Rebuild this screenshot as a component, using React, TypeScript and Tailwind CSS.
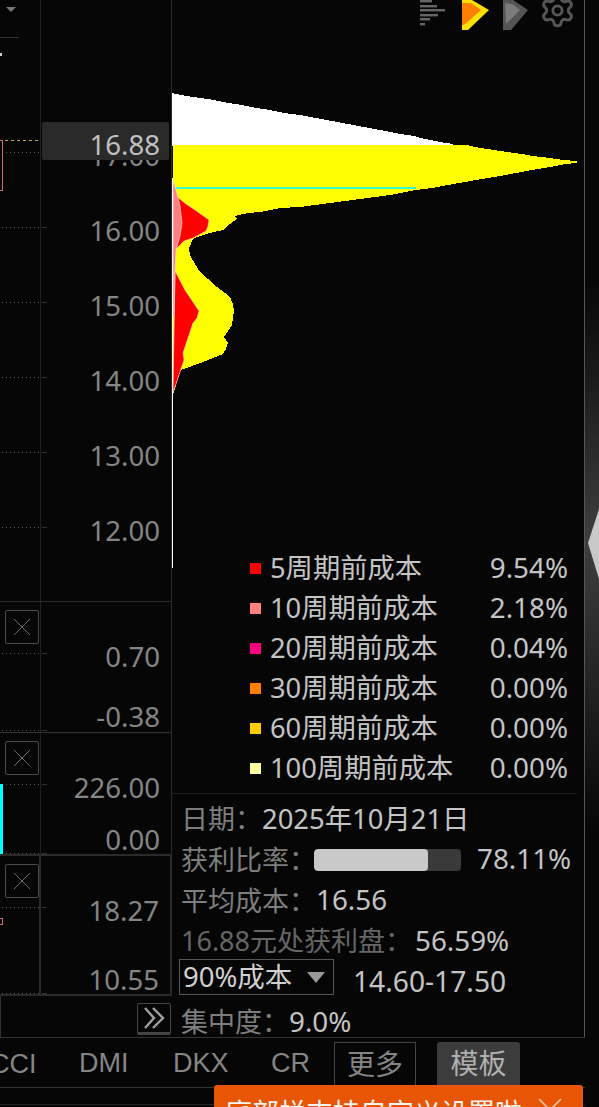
import React from "react";
import { Settings } from "lucide-react";

const FONT = '"Noto Sans","Noto Sans CJK SC",sans-serif';

function Dots({ y, x0 = 6 }: { y: number; x0?: number }) {
  const dots: React.ReactNode[] = [];
  for (let x = x0; x < 40; x += 4) dots.push(<rect key={x} x={x} y={y} width={1} height={1} fill="#5a5a5a" />);
  return (
    <g>
      {dots}
      <rect x={42} y={y} width={5} height={1} fill="#333" />
    </g>
  );
}

function CloseBox({ mt }: { mt: string }) {
  return (
    <div className={`relative ml-[5px] w-[34px] h-[34px] rounded-[2px] border border-[#4a4a4a] flex items-center justify-center ${mt}`}>
      <svg width="18" height="18" viewBox="0 0 18 18">
        <path d="M1 1L17 17M17 1L1 17" stroke="#777" strokeWidth="0.9" fill="none" />
      </svg>
    </div>
  );
}

function AxisLabel({ children, cls }: { children: React.ReactNode; cls?: string }) {
  return <div className={`h-[30px] leading-[30px] text-right pr-[11px] text-[27.6px] text-[#858585] ${cls ?? ""}`}>{children}</div>;
}

function MainAxisLabel({ children }: { children: React.ReactNode }) {
  return <div className="h-[75px] leading-[75px] text-right pr-[11px] text-[27.6px] text-[#858585]">{children}</div>;
}

const LEGEND = [
  ["5周期前成本", "9.54%", "bg-[#ff0000]"],
  ["10周期前成本", "2.18%", "bg-[#ff8080]"],
  ["20周期前成本", "0.04%", "bg-[#ff0080]"],
  ["30周期前成本", "0.00%", "bg-[#ff8000]"],
  ["60周期前成本", "0.00%", "bg-[#ffcc00]"],
  ["100周期前成本", "0.00%", "bg-[#ffffa0]"],
];

function Chart() {
  return (
    <svg className="absolute left-0 top-0" width="412" height="600" viewBox="172 0 412 600" shapeRendering="crispEdges">
      <polygon fill="#fff" points="172,93 186,96 200,98 214,100 228,103 242,105 256,108 270,110 284,113 300,115 316,118 332,121 348,124 364,127 380,130 400,134 414,136 425,139 440,142 453,144 453,146 172,146" />
      <polygon
        fill="#ffff00"
        points="173,145 467,145 480,148 494,150 507,152 522,154 533,156 550,158 563,160 577,161 577,163 565,164 550,167 532,170 516,173 500,176 482,179 465,182 448,185 432,188 416,190 390,195 360,199 330,203 300,207 280,208 260,212 248,213 235,216 237,219 230,224 223,230 210,233 200,236 193,239 189,248 190,255 195,264 200,272 208,279 217,287 225,293 230,297 233,304 234,311 233,318 232,325 228,331 224,337 228,343 226,349 223,354 213,358 203,362 192,366 181,370 176,385 173,395"
      />
      <polygon fill="#ff0000" stroke="#ffd0d0" strokeWidth="0.6" shapeRendering="auto" points="176,196 186,204 198,212 209,220 208,226 206,231 193,238 184,241 176,249" />
      <polygon fill="#ff0000" stroke="#ffd0d0" strokeWidth="0.6" shapeRendering="auto" points="175,271 185,290 199,311 197,318 193,323 188,338 183,353 184,360 173,393" />
      <polygon fill="#ff8080" stroke="#ffd8d8" strokeWidth="0.7" shapeRendering="auto" points="173,180 176,190 180,206 182,223 180,236 176,250 175,270 174,315 173,315" />
      <rect x="176" y="187" width="240" height="2" fill="#33ffcc" />
      <rect x="172" y="178" width="1.4" height="390" fill="#fff" />
    </svg>
  );
}

function ToolIcons() {
  return (
    <div className="relative flex justify-end items-start gap-[13px] pr-[8px] h-[30px]">
      <svg width="26" height="26" viewBox="0 0 26 26" className="mr-[3px]">
        <g fill="#666">
          <rect x="1" y="0" width="12" height="2.4" />
          <rect x="1" y="5" width="17" height="2.4" />
          <rect x="1" y="9" width="25" height="2.4" />
          <rect x="1" y="14" width="18" height="2.4" />
          <rect x="1" y="18" width="10" height="2.4" />
          <rect x="1" y="23" width="5" height="2.4" />
        </g>
      </svg>
      <svg width="28" height="30" viewBox="0 0 28 30">
        <polygon points="1,0 11,0 28,10 7,30 1,30" fill="#ffe000" />
        <polygon points="1,3 10,3 20,10 3,25 1,25" fill="#ff8000" />
      </svg>
      <svg width="26" height="30" viewBox="0 0 26 30">
        <polygon points="1,0 11,0 26,10 9,30 1,30" fill="#555" />
        <polygon points="3,3 10,4 18,10 4,24" fill="#7c7c7c" />
      </svg>
      <Settings size={37} strokeWidth={1.9} color="#565656" className="mt-[-8px] ml-[-2px]" />
    </div>
  );
}

export default function App() {
  return (
    <div className="w-[599px] h-[1107px] overflow-hidden relative flex bg-[#060606]" style={{ fontFamily: FONT }}>
      <div className="w-[585px] flex flex-col shrink-0">
        <div className="flex h-[1038px] shrink-0 border-b border-[#333]">
          {/* left column */}
          <div className="w-[172px] shrink-0 flex flex-col">
            {/* row 1 */}
            <div className="relative h-[602px] shrink-0 flex border-b border-[#2b2b2b]">
              <div className="w-[41px] shrink-0 border-r border-[#222]">
                <svg width="40" height="600" className="overflow-visible">
                  <polygon points="6,7 16,7 11,12" fill="#777" />
                  <rect x="0" y="37" width="19" height="1" fill="#333" />
                  <rect x="0" y="53" width="2" height="3" fill="#ccc" />
                  <line x1="5" y1="140.5" x2="39" y2="140.5" stroke="#c7a157" strokeDasharray="3 3" />
                  <rect x="-2" y="140.5" width="4.5" height="50" fill="none" stroke="#d06a6a" />
                  <Dots y={152} />
                  <Dots y={227} x0={2} />
                  <Dots y={302} x0={2} />
                  <Dots y={377} x0={2} />
                  <Dots y={452} x0={2} />
                  <Dots y={527} x0={2} />
                </svg>
              </div>
              <div className="flex-1 pt-[118px] border-r border-[#2b2b2b]">
                <MainAxisLabel>17.00</MainAxisLabel>
                <MainAxisLabel>16.00</MainAxisLabel>
                <MainAxisLabel>15.00</MainAxisLabel>
                <MainAxisLabel>14.00</MainAxisLabel>
                <MainAxisLabel>13.00</MainAxisLabel>
                <MainAxisLabel>12.00</MainAxisLabel>
              </div>
              <div className="absolute left-[42px] top-[122px] w-[127px] h-[38px] rounded-[2px] bg-[#2a2a2a] text-right pr-[9px] text-[27.6px] leading-[44px] text-[#c0c0c0]">
                16.88
              </div>
            </div>
            {/* row 2 */}
            <div className="relative h-[131px] shrink-0 flex border-b border-[#333]">
              <div className="relative w-[41px] shrink-0 border-r border-[#222]">
                <svg width="40" height="130" className="absolute left-0 top-0 overflow-visible">
                  <Dots y={51} x0={2} />
                  <Dots y={128} x0={2} />
                </svg>
                <CloseBox mt="mt-[8px]" />
              </div>
              <div className="flex-1 pt-[39px] border-r border-[#2b2b2b]">
                <AxisLabel>0.70</AxisLabel>
                <AxisLabel cls="mt-[30px]">-0.38</AxisLabel>
              </div>
            </div>
            {/* row 3 */}
            <div className="relative h-[123px] shrink-0 flex border-b-2 border-[#2b2b2b]">
              <div className="relative w-[41px] shrink-0 border-r border-[#222]">
                <svg width="40" height="121" className="absolute left-0 top-0 overflow-visible">
                  <rect x="0" y="51" width="3" height="70" fill="#00ffff" />
                  <Dots y={51} x0={6} />
                  <Dots y={120} x0={6} />
                </svg>
                <CloseBox mt="mt-[8px]" />
              </div>
              <div className="flex-1 pt-[39px] border-r border-[#2b2b2b]">
                <AxisLabel>226.00</AxisLabel>
                <AxisLabel cls="mt-[22px]">0.00</AxisLabel>
              </div>
            </div>
            {/* row 4 */}
            <div className="relative h-[140px] shrink-0 flex border-b-2 border-[#2b2b2b]">
              <div className="relative w-[41px] shrink-0 border-r-2 border-[#2b2b2b]">
                <svg width="40" height="138" className="absolute left-0 top-0 overflow-visible">
                  <Dots y={51} x0={2} />
                  <Dots y={137} x0={2} />
                  <rect x="-2" y="62.5" width="4.5" height="6" fill="none" stroke="#d06a6a" />
                </svg>
                <CloseBox mt="mt-[8px]" />
              </div>
              <div className="flex-1 pt-[39px] border-r-2 border-[#2b2b2b]">
                <AxisLabel>18.27</AxisLabel>
                <AxisLabel cls="mt-[39px]">10.55</AxisLabel>
              </div>
            </div>
            {/* toolbar */}
            <div className="flex-1 flex justify-end items-start pt-[7px] pr-[1px] border-l border-[#333]">
              <div className="w-[34px] h-[32px] rounded-[2px] border border-[#444] border-b-[3px] flex items-center justify-center">
                <svg width="24" height="22" viewBox="0 0 24 22" fill="none" stroke="#a0a0a0" strokeWidth="2.4">
                  <path d="M3 1L12 11L3 21" />
                  <path d="M11 1L21 11L11 21" />
                </svg>
              </div>
            </div>
          </div>
          {/* right column */}
          <div className="flex-1 flex flex-col overflow-hidden border-r border-[#555] text-[27px]">
            <div className="relative h-[548px] shrink-0">
              <Chart />
              <ToolIcons />
            </div>
            <div className="shrink-0 pl-[78px] pr-[9px] text-[#c4c4c4] border-b border-[#1c1c1c] h-[246px] mr-[7px]">
              {LEGEND.map(([n, v, c]) => (
                <div key={n} className="h-[40px] flex items-center">
                  <span className={`w-[11px] h-[11px] mr-[9px] ${c}`} />
                  <span className="flex-1 leading-[40px] text-[27.3px]">{n}</span>
                  <span className="leading-[38px] mb-[2px] text-[27.8px]">{v}</span>
                </div>
              ))}
            </div>
            <div className="shrink-0 pl-[9px] text-[#7e7e7e]">
              <div className="h-[40px] mt-[5px] leading-[40px] flex">
                <span>日期：</span>
                <span className="text-[#c4c4c4] text-[27.4px]">2025年10月21日</span>
              </div>
              <div className="h-[41px] leading-[41px] flex items-center">
                <span>获利比率：</span>
                <div className="ml-[-2px] w-[147px] h-[22px] rounded-[4px] bg-[#3a3a3a] overflow-hidden">
                  <div className="w-[114px] h-full rounded-[4px] bg-[#c8c8c8]" />
                </div>
                <span className="ml-[16px] mb-[2px] text-[#c4c4c4] text-[27.8px]">78.11%</span>
              </div>
              <div className="h-[41px] leading-[39px] flex">
                <span className="leading-[41px]">平均成本：</span>
                <span className="text-[#c4c4c4] text-[27.8px]">16.56</span>
              </div>
              <div className="h-[40px] leading-[38px] flex">
                <span className="text-[#666] leading-[40px]">16.88元处获利盘：</span>
                <span className="ml-[3px] text-[#c4c4c4] text-[27.8px]">56.59%</span>
              </div>
              <div className="h-[37px] flex items-start ml-[-2px]">
                <div className="mt-[-2px] w-[155px] h-[36px] border border-[#555] flex items-center pl-[3px] text-[#d0d0d0] leading-[38px] text-[27.5px]">
                  <span className="flex-1">90%成本</span>
                  <svg width="18" height="11" viewBox="0 0 18 11" className="mr-[8px]">
                    <polygon points="0,0 18,0 9,11" fill="#9a9a9a" />
                  </svg>
                </div>
                <span className="ml-[19px] mt-[2px] text-[#c4c4c4] leading-[36px] text-[28.2px]">14.60-17.50</span>
              </div>
              <div className="h-[31px] mt-[8px] leading-[31px] flex">
                <span>集中度：</span>
                <span className="text-[#c4c4c4] text-[27.8px]">9.0%</span>
              </div>
            </div>
          </div>
        </div>
        {/* tabs */}
        <div className="relative h-[50px] shrink-0 flex items-end text-[#858585] text-[27px] border-b border-[#333] overflow-hidden">
          <span className="absolute left-[-10px] top-[8px] leading-[36px]" style={{ fontFamily: '"Liberation Sans",sans-serif' }}>CCI</span>
          <div className="flex items-end w-full pl-[79px]" style={{ fontFamily: '"Liberation Sans","Noto Sans CJK SC",sans-serif' }}>
            <span className="w-[94px] h-[45px] leading-[42px]">DMI</span>
            <span className="w-[98px] h-[45px] leading-[42px]">DKX</span>
            <span className="w-[63px] h-[45px] leading-[42px]">CR</span>
            <span className="w-[82px] h-[45px] border border-[#444] text-center text-[28px] leading-[42px]" style={{ fontFamily: FONT }}>更多</span>
            <span className="w-[83px] h-[45px] ml-[21px] rounded-t-[3px] bg-[#3c3c3c] text-[#b0b0b0] text-center text-[28px] leading-[42px]" style={{ fontFamily: FONT }}>模板</span>
          </div>
        </div>
        <div className="h-[17px] shrink-0 border-b border-[#222]" />
      </div>
      {/* side strip */}
      <div className="relative flex-1 bg-[linear-gradient(180deg,#060606_0%,#060606_25%,#3e3e3e_49%,#060606_75%,#060606_100%)]">
        <svg width="14" height="80" viewBox="0 0 14 80" className="absolute left-0 top-[505px]">
          <polygon points="14,4 3,38 14,74" fill="#c8c8c8" />
        </svg>
      </div>
      {/* toast */}
      <div className="absolute left-[214px] top-[1085px] w-[369px] h-[40px] rounded-t-[3px] bg-[#e85504] flex items-start pl-[11px] pt-[8px] text-[27px] text-[#f5f5f5] leading-[40px]">
        <span>底部栏支持自定义设置啦</span>
        <svg width="24" height="24" viewBox="0 0 24 24" className="ml-[16px] mt-[5px]">
          <path d="M1 1L23 23M23 1L1 23" stroke="#f4c9a8" strokeWidth="1.6" fill="none" />
        </svg>
      </div>
    </div>
  );
}
